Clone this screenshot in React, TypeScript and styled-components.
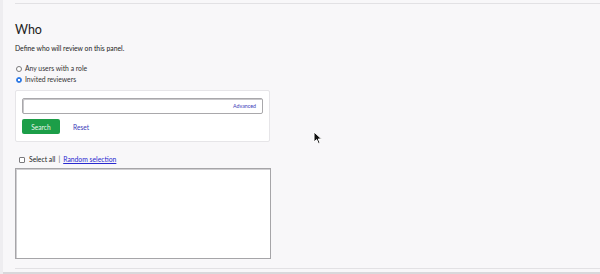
import React, { useState } from 'react';
import styled, { createGlobalStyle } from 'styled-components';

const GlobalStyle = createGlobalStyle`
  html, body {
    margin: 0;
    padding: 0;
    background: #f8f7f9;
  }
  body {
    font-family: Lato, 'Open Sans', sans-serif;
    color: #222;
  }
`;

function App() {
  const [mode, setMode] = useState<'role' | 'invited'>('invited');
  const [query, setQuery] = useState('');
  const [selectAll, setSelectAll] = useState(false);

  return (
    <Page>
      <GlobalStyle />
      <Panel>
        <Title>Who</Title>
        <Description>Define who will review on this panel.</Description>
        <RadioGroup>
          <RadioLabel>
            <Radio
              type='radio'
              name='who'
              checked={mode === 'role'}
              onChange={() => setMode('role')}
            />
            Any users with a role
          </RadioLabel>
          <RadioLabel>
            <Radio
              type='radio'
              name='who'
              checked={mode === 'invited'}
              onChange={() => setMode('invited')}
            />
            Invited reviewers
          </RadioLabel>
        </RadioGroup>
        <SearchBox>
          <InputWrap>
            <SearchInput value={query} onChange={(e) => setQuery(e.target.value)} />
            <AdvancedLink href='#'>Advanced</AdvancedLink>
          </InputWrap>
          <ButtonRow>
            <SearchButton type='button'>Search</SearchButton>
            <ResetLink href='#' onClick={() => setQuery('')}>
              Reset
            </ResetLink>
          </ButtonRow>
        </SearchBox>
        <SelectRow>
          <Checkbox
            type='checkbox'
            checked={selectAll}
            onChange={() => setSelectAll(!selectAll)}
          />
          <span>Select all</span>
          <Divider>|</Divider>
          <RandomLink href='#'>Random selection</RandomLink>
        </SelectRow>
        <ReviewerList />
      </Panel>
      <Cursor width='10' height='14' viewBox='0 0 10 14'>
        <path
          d='M1 1 L1 11 L3.6 8.6 L5.4 12.6 L7 11.9 L5.3 8 L8.6 8 Z'
          fill='#111'
          stroke='#fff'
          strokeWidth='1'
          strokeLinejoin='round'
        />
      </Cursor>
      <BottomBar />
    </Page>
  );
}

const Page = styled.div`
  position: relative;
  width: 600px;
  height: 274px;
  overflow: hidden;
  box-sizing: border-box;
  border-left: 3px solid #eeedf0;
  display: flex;
  flex-direction: column;
`;

const Panel = styled.section`
  margin: 3px 0 0 12px;
  border-top: 1px solid #e2e1e4;
  border-bottom: 1px solid #e2e1e4;
  padding: 18px 0 9px;
  display: flex;
  flex-direction: column;
  align-items: flex-start;
`;

const Title = styled.h2`
  margin: 0;
  font-size: 12.5px;
  font-weight: 400;
  line-height: 16px;
  color: #222;
`;

const Description = styled.p`
  margin: 6px 0 0;
  font-size: 6.8px;
  line-height: 9px;
  color: #222;
`;

const RadioGroup = styled.div`
  margin-top: 11px;
  display: flex;
  flex-direction: column;
  gap: 2px;
`;

const RadioLabel = styled.label`
  display: flex;
  align-items: center;
  gap: 3px;
  font-size: 6.8px;
  line-height: 9px;
  color: #333;
`;

const Radio = styled.input`
  appearance: none;
  box-sizing: border-box;
  margin: 0 0 0 1px;
  width: 6px;
  height: 6px;
  border-radius: 50%;
  border: 1px solid #7a797c;
  background: #fff;
  &:checked {
    border-color: #2f7ae5;
    background: radial-gradient(circle, #fff 0 0.8px, #2f7ae5 1.3px);
  }
`;

const SearchBox = styled.div`
  margin-top: 6px;
  box-sizing: border-box;
  width: 255px;
  height: 52px;
  background: #fff;
  border: 1px solid #e6e5e8;
  border-radius: 2px;
  padding: 7px 7px 0 6px;
  display: flex;
  flex-direction: column;
  gap: 5px;
`;

const InputWrap = styled.div`
  box-sizing: border-box;
  height: 16px;
  width: 241px;
  border: 1px solid #a9a8ab;
  box-shadow: inset 1px 1px 0 #c9c8cb;
  border-radius: 2px;
  display: flex;
  align-items: center;
  padding-right: 6px;
  background: #fff;
`;

const SearchInput = styled.input`
  flex: 1;
  border: none;
  outline: none;
  background: transparent;
  height: 100%;
  font-size: 8px;
  padding: 0 4px;
  min-width: 0;
`;

const AdvancedLink = styled.a`
  font-size: 5.3px;
  color: #3a3ab8;
  text-decoration: none;
`;

const ButtonRow = styled.div`
  display: flex;
  align-items: center;
  gap: 13px;
`;

const SearchButton = styled.button`
  box-sizing: border-box;
  width: 38px;
  height: 15px;
  border: none;
  border-radius: 2px;
  background: #1c9e48;
  color: #eaf6ee;
  font-family: inherit;
  font-size: 6.6px;
  padding: 0;
  cursor: pointer;
`;

const ResetLink = styled.a`
  font-size: 6.6px;
  color: #3a3ab8;
  text-decoration: none;
`;

const SelectRow = styled.div`
  margin-top: 13px;
  margin-left: 4px;
  display: flex;
  align-items: center;
  gap: 3px;
  font-size: 6.8px;
  line-height: 9px;
  color: #222;
`;

const Checkbox = styled.input`
  appearance: none;
  box-sizing: border-box;
  margin: 0 1px 0 0;
  width: 6px;
  height: 6px;
  border: 1px solid #7a797c;
  border-radius: 1px;
  background: #fff;
  &:checked {
    background: #2f7ae5;
    border-color: #2f7ae5;
  }
`;

const Divider = styled.span`
  color: #555;
`;

const RandomLink = styled.a`
  color: #2a2ad0;
  text-decoration: underline;
`;

const ReviewerList = styled.div`
  margin-top: 4px;
  box-sizing: border-box;
  width: 256px;
  height: 91px;
  background: #fff;
  border: 1px solid #a6a5a8;
  box-shadow: inset 1px 1px 0 #d0cfd2;
`;

const Cursor = styled.svg`
  position: absolute;
  left: 310px;
  top: 131px;
`;

const BottomBar = styled.div`
  margin-top: auto;
  height: 2px;
  background: #d9d8db;
`;

export default App;
